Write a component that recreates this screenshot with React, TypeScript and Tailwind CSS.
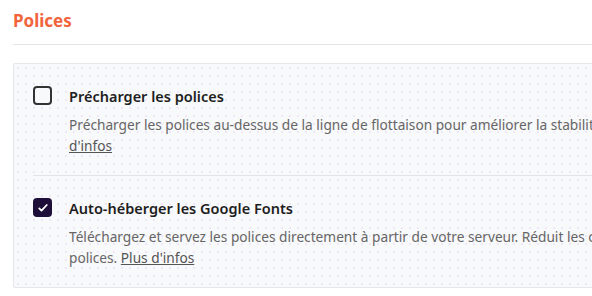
const dots =
  'bg-[#f8f9fa] bg-[radial-gradient(#efe6f6_0.8px,transparent_1px)] bg-[length:8px_8px]'

function Checkbox({ checked }: { checked?: boolean }) {
  if (checked) {
    return (
      <span className="flex h-[19px] w-[19px] shrink-0 items-center justify-center rounded-[4px] bg-[#1d0f3a]">
        <svg viewBox="0 0 16 16" className="h-[12px] w-[12px]" fill="none">
          <path d="M3 8.5l3 3 7-7.5" stroke="#fff" strokeWidth="2.4" strokeLinecap="round" strokeLinejoin="round" />
        </svg>
      </span>
    )
  }
  return <span className="h-[19px] w-[19px] shrink-0 rounded-[4px] border-2 border-[#333] bg-[#f8f9fa]" />
}

function Option({
  checked,
  title,
  children,
}: {
  checked?: boolean
  title: string
  children: React.ReactNode
}) {
  return (
    <div className="flex gap-[17px]">
      <Checkbox checked={checked} />
      <div className="min-w-0">
        <p className="text-[14.5px] font-semibold leading-[20px] text-[#1e1e1e]">{title}</p>
        <p className="mt-[8px] whitespace-nowrap text-[13.7px] leading-[21px] text-[#666]">{children}</p>
      </div>
    </div>
  )
}

export default function App() {
  return (
    <div className="h-[296px] w-[592px] overflow-hidden bg-white pl-[13px] font-['Noto_Sans',sans-serif]">
      <div className="w-[640px]">
        <h2 className="pt-[9px] text-[17px] font-bold leading-[24px] text-[#f2643c]">Polices</h2>
        <div className="mt-[11px] border-t border-[#e2e4e7]" />

        <div className={`mt-[18px] w-[640px] rounded-[2px] border border-[#e6e7ea] px-[19px] ${dots}`}>
          {/* Précharger */}
          <div className="border-b border-[#e2e4e7] pb-[19px] pt-[22px]">
            <Option title="Précharger les polices">
              Précharger les polices au-dessus de la ligne de flottaison pour améliorer la stabilité de la mise en page.{' '}
              <a className="text-[#555] underline">
                Plus
                <br />
                d'infos
              </a>
            </Option>
          </div>

          {/* Google Fonts */}
          <div className="pb-[19px] pt-[22px]">
            <Option checked title="Auto-héberger les Google Fonts">
              Téléchargez et servez les polices directement à partir de votre serveur. Réduit les connexions aux
              <br />
              polices. <a className="text-[#555] underline">Plus d'infos</a>
            </Option>
          </div>
        </div>
      </div>
    </div>
  )
}
